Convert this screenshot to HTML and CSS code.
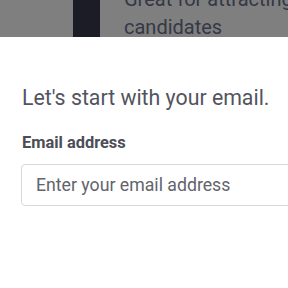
FILE: index.html
```html
<!DOCTYPE html>
<html>
<head>
<meta charset="utf-8">
<link rel="stylesheet" href="styles.css">
</head>
<body>
<div class="backdrop">
  <div class="bg-row">
    <span class="bg-left">y</span>
    <div class="bg-bar"></div>
    <div class="bg-text">Great for attracting<br>candidates</div>
  </div>
</div>
<div class="modal">
  <h1 class="title">Let's start with your email.</h1>
  <label class="label" for="email">Email address</label>
  <input class="input" id="email" type="email" placeholder="Enter your email address">
</div>
</body>
</html>
```
FILE: styles.css
```css
* { box-sizing: border-box; }
html, body {
  margin: 0;
  padding: 0;
  width: 288px;
  height: 288px;
  overflow: hidden;
  background: #fff;
  font-family: Roboto, "Liberation Sans", sans-serif;
}
.backdrop {
  height: 37px;
  background: #7f7f7f;
  overflow: hidden;
}
.bg-row {
  display: flex;
  height: 37px;
}
.bg-left {
  flex: 0 0 81px;
  font-size: 20px;
  color: #2c2e38;
  margin-top: -14px;
  margin-left: -8px;
}
.bg-bar {
  flex: 0 0 27px;
  height: 37px;
  background: #1b1c25;
}
.bg-text {
  margin-left: 24px;
  margin-top: -15px;
  font-size: 20px;
  line-height: 28px;
  color: #353846;
  white-space: nowrap;
}
.modal {
  padding: 46px 0 0 21px;
}
.title {
  margin: 0 0 0 1px;
  font-size: 21.3px;
  font-weight: 400;
  line-height: 30px;
  color: #52545e;
}
.label {
  display: block;
  margin: 20px 0 0 1px;
  font-size: 16.4px;
  font-weight: 700;
  line-height: 20px;
  color: #4b4d57;
}
.input {
  display: block;
  margin-top: 11px;
  width: 300px;
  height: 42px;
  border: 1px solid #d9d9dc;
  border-radius: 4px;
  padding: 0 14px;
  font-family: Roboto, "Liberation Sans", sans-serif;
  font-size: 17.7px;
  color: #555;
  outline: none;
}
.input::placeholder {
  color: #62646c;
  opacity: 1;
}
```
